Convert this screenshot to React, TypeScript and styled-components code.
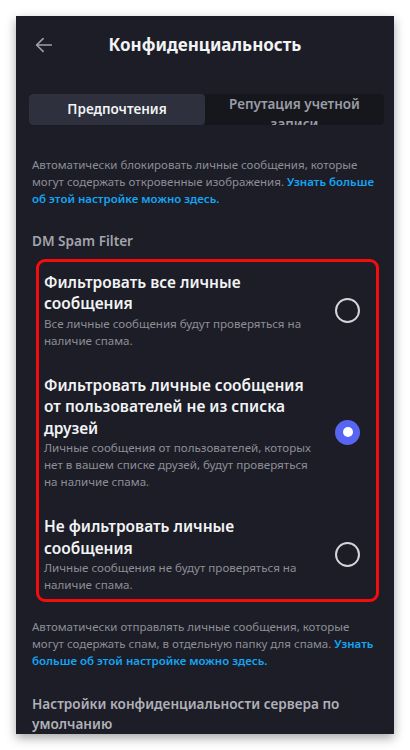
import React from "react";
import styled, { createGlobalStyle } from "styled-components";

const Global = createGlobalStyle`
  html, body { margin: 0; padding: 0; background: #ffffff; }
  body { font-family: "Noto Sans", "Open Sans", sans-serif; }
  * { box-sizing: border-box; }
`;

const Page = styled.div`
  width: 410px;
  height: 750px;
  padding: 16px;
  background: #ffffff;
`;

const Panel = styled.div`
  width: 378px;
  height: 718px;
  background: #1c1d26;
  overflow: hidden;
  box-shadow: 0 4px 10px rgba(0, 0, 0, 0.35);
  display: flex;
  flex-direction: column;
`;

const Header = styled.div`
  height: 58px;
  display: grid;
  grid-template-columns: 56px 1fr 56px;
  align-items: center;
`;

const Back = styled.div`
  display: flex;
  justify-content: center;
  color: #9fa0a8;
`;

const Title = styled.h1`
  margin: 0;
  text-align: center;
  font-size: 17px;
  font-weight: 700;
  color: #f2f3f5;
`;

const Tabs = styled.div`
  margin: 20px 10px 0 13px;
  height: 31px;
  display: grid;
  grid-template-columns: 176px 1fr;
  background: #16171d;
  border-radius: 4px;
  overflow: hidden;
`;

const Tab = styled.div<{ $active?: boolean }>`
  background: ${(p) => (p.$active ? "#2e303d" : "transparent")};
  border-radius: 4px;
  color: ${(p) => (p.$active ? "#f2f3f5" : "#9a9ca6")};
  font-size: 13.5px;
  font-weight: 600;
  text-align: center;
  line-height: 20px;
  padding-top: ${(p) => (p.$active ? "5px" : "0px")};
  overflow: hidden;
`;

const Body = styled.div<{ $top: number }>`
  padding: 0 16px;
  margin-top: ${(p) => p.$top}px;
  display: flex;
  flex-direction: column;
`;

const Note = styled.p`
  margin: 0;
  font-size: 11.5px;
  line-height: 17px;
  color: #8d8e97;
`;

const Link = styled.span`
  color: #14a5f5;
  font-weight: 600;
`;

const SectionLabel = styled.div<{ $big?: boolean; $gap: number }>`
  margin-top: ${(p) => p.$gap}px;
  font-size: 13.6px;
  font-weight: 600;
  line-height: 20px;
  color: ${(p) => (p.$big ? "#b0b1b8" : "#a3a4ac")};
`;

const Highlight = styled.div`
  margin: 8px 15px 0 20px;
  border: 3px solid #f50d0d;
  border-radius: 9px;
  padding: 10px 0 6px 5px;
  display: flex;
  flex-direction: column;
  gap: 26px;
`;

const Option = styled.div`
  display: grid;
  grid-template-columns: 276px 1fr;
  align-items: center;
`;

const OptionText = styled.div`
  display: flex;
  flex-direction: column;
`;

const OptionTitle = styled.div`
  font-size: 15.5px;
  font-weight: 600;
  line-height: 21.5px;
  color: #f2f3f5;
`;

const OptionSub = styled.div`
  font-size: 11.6px;
  line-height: 17px;
  color: #8d8e97;
`;

const Radio = styled.div<{ $checked?: boolean }>`
  justify-self: start;
  margin-left: 15px;
  width: 25px;
  height: 25px;
  border-radius: 50%;
  border: ${(p) => (p.$checked ? "none" : "2px solid #d4d5da")};
  background: ${(p) => (p.$checked ? "#5865f2" : "transparent")};
  display: flex;
  align-items: center;
  justify-content: center;
  &::after {
    content: "";
    display: ${(p) => (p.$checked ? "block" : "none")};
    width: 10px;
    height: 10px;
    border-radius: 50%;
    background: #ffffff;
  }
`;

const options = [
  {
    title: "Фильтровать все личные сообщения",
    sub: "Все личные сообщения будут проверяться на наличие спама.",
    checked: false,
  },
  {
    title: "Фильтровать личные сообщения от пользователей не из списка друзей",
    sub: "Личные сообщения от пользователей, которых нет в вашем списке друзей, будут проверяться на наличие спама.",
    checked: true,
  },
  {
    title: "Не фильтровать личные сообщения",
    sub: "Личные сообщения не будут проверяться на наличие спама.",
    checked: false,
  },
];

export default function App() {
  return (
    <Page>
      <Global />
      <Panel>
        <Header>
          <Back>
            <svg width="22" height="22" viewBox="0 0 24 24" fill="none" stroke="currentColor" strokeWidth="1.8" strokeLinecap="round" strokeLinejoin="round">
              <path d="M20 12H4" />
              <path d="M11 5l-7 7 7 7" />
            </svg>
          </Back>
          <Title>Конфиденциальность</Title>
          <div />
        </Header>
        <Tabs>
          <Tab $active>Предпочтения</Tab>
          <Tab>Репутация учетной записи</Tab>
        </Tabs>
        <Body $top={31}>
          <Note>
            Автоматически блокировать личные сообщения, которые могут содержать откровенные изображения.{" "}
            <Link>Узнать больше об этой настройке можно здесь.</Link>
          </Note>
          <SectionLabel $gap={24}>DM Spam Filter</SectionLabel>
        </Body>
        <Highlight>
          {options.map((o) => (
            <Option key={o.title}>
              <OptionText>
                <OptionTitle>{o.title}</OptionTitle>
                <OptionSub>{o.sub}</OptionSub>
              </OptionText>
              <Radio $checked={o.checked} />
            </Option>
          ))}
        </Highlight>
        <Body $top={16}>
          <Note>
            Автоматически отправлять личные сообщения, которые могут содержать спам, в отдельную папку для спама.{" "}
            <Link>Узнать больше об этой настройке можно здесь.</Link>
          </Note>
          <SectionLabel $big $gap={25}>Настройки конфиденциальности сервера по умолчанию</SectionLabel>
        </Body>
      </Panel>
    </Page>
  );
}
